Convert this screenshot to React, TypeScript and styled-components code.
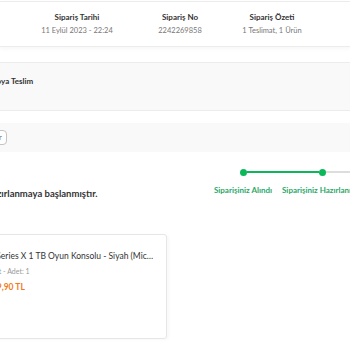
import React from 'react';
import styled, { createGlobalStyle } from 'styled-components';

const GlobalStyle = createGlobalStyle`
  html, body {
    margin: 0;
    padding: 0;
    overflow: hidden;
    background: #ffffff;
    font-family: 'Source Sans Pro', Lato, 'Liberation Sans', sans-serif;
  }
`;

const summary = [
  { title: 'Sipariş Tarihi', value: '11 Eylül 2023 - 22:24' },
  { title: 'Sipariş No', value: '2242269858' },
  { title: 'Sipariş Özeti', value: '1 Teslimat, 1 Ürün' },
];

const steps = [
  { label: 'Siparişiniz Alındı', done: true },
  { label: 'Siparişiniz Hazırlanıyor', done: true },
  { label: 'Kargoya Verildi', done: false },
  { label: 'Teslim Edildi', done: false },
];

const App = () => {
  return (
    <Page>
      <GlobalStyle />
      <SummaryCard>
        {summary.map((item) => (
          <SummaryCol key={item.title}>
            <SummaryTitle>{item.title}</SummaryTitle>
            <SummaryValue>{item.value}</SummaryValue>
          </SummaryCol>
        ))}
      </SummaryCard>

      <DeliveryHead>
        <DeliveryTitle>Kargoya Teslim</DeliveryTitle>
      </DeliveryHead>

      <ActionBar>
        <PillBtn>Detaylar</PillBtn>
      </ActionBar>

      <StatusRow>
        <StatusText>Siparişiniz hazırlanmaya başlanmıştır.</StatusText>
        <Stepper>
          {steps.map((step, i) => (
            <Step key={step.label}>
              <Track>
                <Line visible={i > 0} done={step.done} />
                <Dot done={step.done} />
                <Line
                  visible={i < steps.length - 1}
                  done={i + 1 < steps.length && steps[i + 1].done}
                />
              </Track>
              <StepLabel done={step.done}>{step.label}</StepLabel>
            </Step>
          ))}
        </Stepper>
      </StatusRow>

      <ProductCard>
        <ProductName>
          Xbox Series X 1 TB Oyun Konsolu - Siyah (Microsoft Türkiye Garantili)
        </ProductName>
        <ProductMeta>Tek Ebat - Adet: 1</ProductMeta>
        <ProductPrice>19.999,90 TL</ProductPrice>
      </ProductCard>
    </Page>
  );
};

const Page = styled.div`
  width: 350px;
  height: 350px;
  padding-top: 1px;
  box-sizing: border-box;
`;

const SummaryCard = styled.div`
  display: grid;
  grid-template-columns: 98px 108px 76px;
  padding-left: 28px;
  height: 44px;
  border-top: 1px solid #ececec;
  border-bottom: 1px solid #ececec;
  box-shadow: 0 2px 4px rgba(0, 0, 0, 0.035);
  align-content: center;
`;

const SummaryCol = styled.div`
  display: flex;
  flex-direction: column;
  align-items: center;
  white-space: nowrap;
`;

const SummaryTitle = styled.div`
  font-size: 8px;
  font-weight: 700;
  color: #333333;
  line-height: 13px;
`;

const SummaryValue = styled.div`
  font-size: 7.5px;
  color: #777777;
  line-height: 14px;
`;

const DeliveryHead = styled.div`
  margin-top: 15px;
  height: 49px;
  background: #f9f9f9;
  border-top: 1px solid #ececec;
  border-bottom: 1px solid #ececec;
  padding-top: 13px;
  box-sizing: border-box;
  overflow: hidden;
`;

const DeliveryTitle = styled.div`
  margin-left: -20px;
  font-size: 8px;
  font-weight: 700;
  color: #333333;
  line-height: 11px;
  white-space: nowrap;
`;

const ActionBar = styled.div`
  margin-top: 12px;
  height: 29px;
  background: #f9f9f9;
  display: flex;
  align-items: center;
  overflow: hidden;
`;

const PillBtn = styled.div`
  margin-left: -35px;
  height: 13px;
  padding: 0 4px 0 6px;
  border: 1px solid #c4c4c4;
  border-radius: 4px;
  background: #ffffff;
  font-size: 8px;
  color: #777777;
  line-height: 13px;
  white-space: nowrap;
`;

const StatusRow = styled.div`
  display: grid;
  grid-template-columns: 204px 1fr;
  padding-top: 16px;
  height: 81px;
  box-sizing: border-box;
  overflow: hidden;
`;

const StatusText = styled.div`
  margin-left: -58px;
  margin-top: 20px;
  font-size: 9.5px;
  font-weight: 700;
  color: #333333;
  white-space: nowrap;
`;

const Stepper = styled.div`
  display: flex;
  width: 312px;
`;

const Step = styled.div`
  flex: 0 0 78px;
  display: flex;
  flex-direction: column;
  align-items: center;
`;

const Track = styled.div`
  width: 100%;
  height: 8px;
  display: flex;
  align-items: center;
`;

const Line = styled.div<{ visible: boolean; done: boolean }>`
  flex: 1;
  height: 1.5px;
  background: ${(p) =>
    !p.visible ? 'transparent' : p.done ? '#0bb75a' : '#dddddd'};
`;

const Dot = styled.div<{ done: boolean }>`
  width: 7px;
  height: 7px;
  border-radius: 50%;
  flex-shrink: 0;
  background: ${(p) => (p.done ? '#0bb75a' : '#dddddd')};
`;

const StepLabel = styled.div<{ done: boolean }>`
  margin-top: 9px;
  font-size: 8px;
  font-weight: 700;
  color: ${(p) => (p.done ? '#2aa868' : '#999999')};
  white-space: nowrap;
`;

const ProductCard = styled.div`
  margin-top: 1px;
  margin-left: -44px;
  width: 211px;
  height: 105px;
  box-sizing: border-box;
  border: 1px solid #e6e6e6;
  border-radius: 3px;
  padding: 15px 12px 0 18px;
  box-shadow: 2px 1px 3px rgba(0, 0, 0, 0.03);
`;

const ProductName = styled.div`
  font-size: 8.5px;
  color: #333333;
  line-height: 12px;
  white-space: nowrap;
  overflow: hidden;
  text-overflow: ellipsis;
`;

const ProductMeta = styled.div`
  margin-top: 4px;
  font-size: 7px;
  color: #999999;
  line-height: 11px;
  white-space: nowrap;
`;

const ProductPrice = styled.div`
  margin-top: 4px;
  font-size: 8.5px;
  font-weight: 700;
  color: #f27a1a;
  line-height: 12px;
  white-space: nowrap;
`;

export default App;
